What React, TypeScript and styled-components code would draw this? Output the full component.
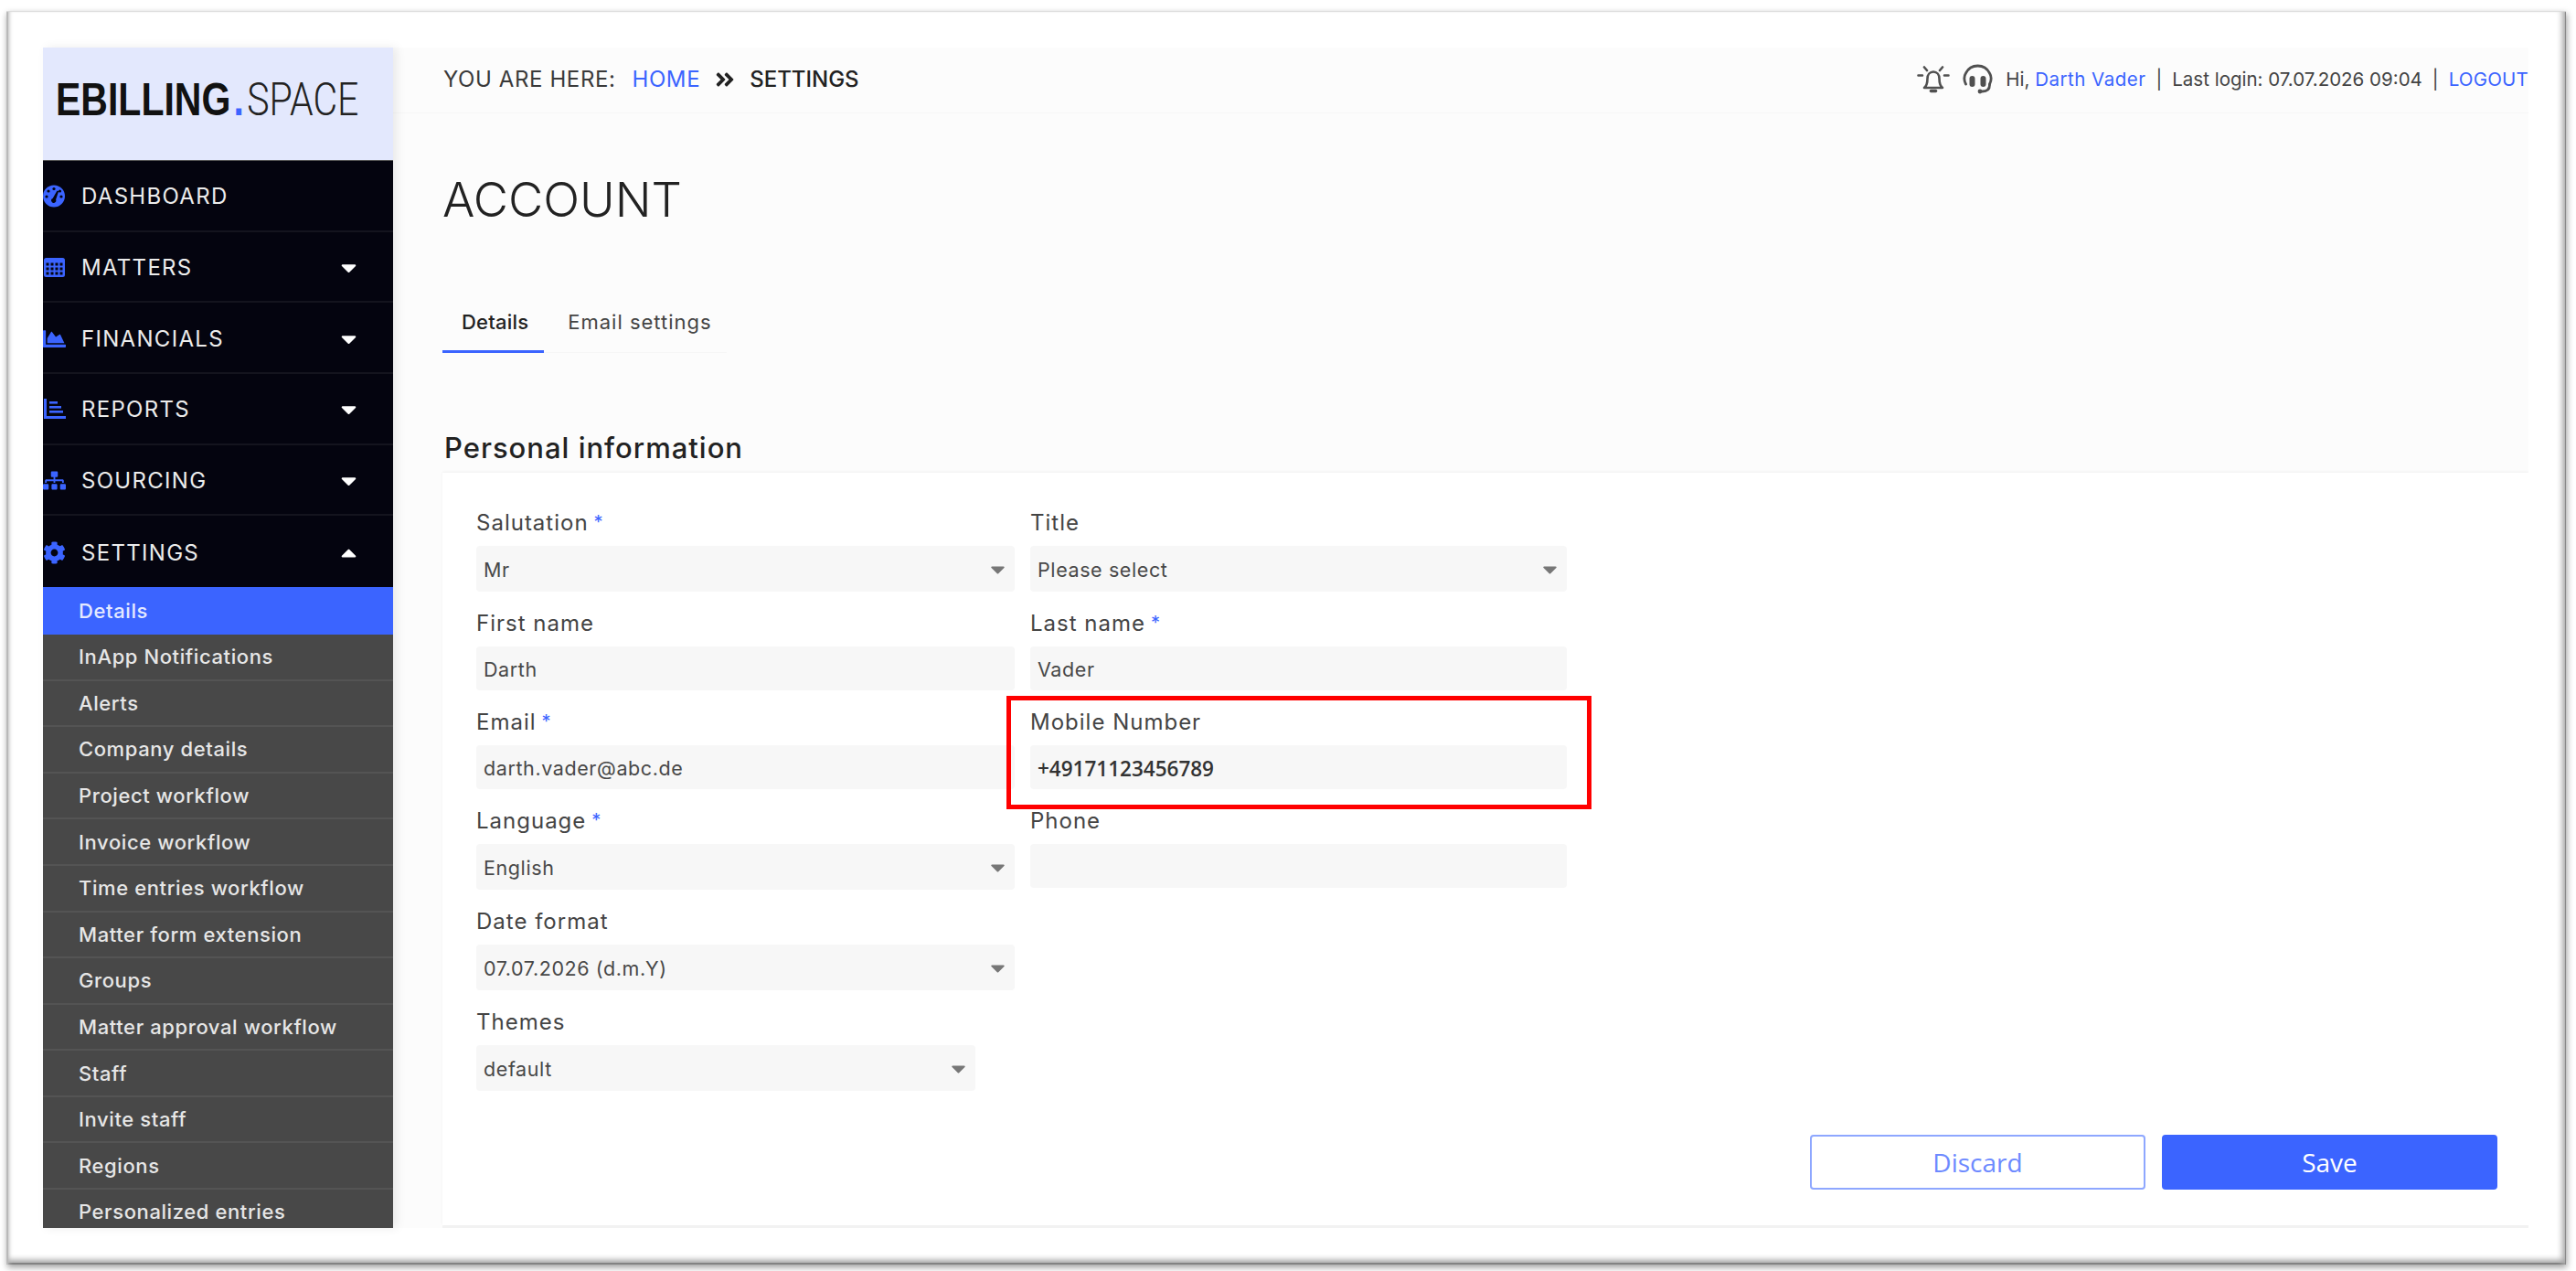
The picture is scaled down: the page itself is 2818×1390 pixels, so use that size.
import React from 'react';
import styled, { createGlobalStyle } from 'styled-components';
import {
  FaAngleDoubleRight,
  FaCaretDown,
  FaCaretUp,
  FaChartArea,
  FaCog,
  FaSitemap,
} from 'react-icons/fa';

const BLUE = '#3b64ff';
const FONT = 'Inter, "Noto Sans", sans-serif';

const GlobalStyle = createGlobalStyle`
  html, body {
    margin: 0;
    padding: 0;
    height: 100%;
    overflow: hidden;
    background: #ffffff;
    font-family: ${FONT};
  }
  * { box-sizing: border-box; }
`;

const StyledPage = styled.div`
  width: 2818px;
  height: 1390px;
  padding: 12px 11px 7px 7px;
`;

const StyledFrame = styled.div`
  display: flex;
  width: 100%;
  height: 100%;
  padding: 40px 41px 40px 40px;
  background: #ffffff;
  box-shadow:
    inset 0 1px 1px #dcdcdc,
    inset 2px 0 0 #b8b8b8,
    inset 6px 0 4px -3px #bbbbbb,
    inset -1px 0 0 #808080,
    inset -8px 0 6px -4px #a8a8a8,
    inset 0 -2px 0 #808080,
    inset 0 -9px 6px -4px #a0a0a0,
    1px 3px 7px rgba(0, 0, 0, 0.38);
`;

const StyledSidebar = styled.aside`
  flex: 0 0 383px;
  display: flex;
  flex-direction: column;
  overflow: hidden;
  box-shadow: 4px 0 10px rgba(0, 0, 0, 0.08);
  z-index: 1;
`;

const StyledLogo = styled.div`
  flex: 0 0 124px;
  display: flex;
  align-items: center;
  padding: 0 0 9px 14px;
  background: #e3e8fd;
  border-bottom: 1px solid #555;
  font-family: "Liberation Sans", sans-serif;
  font-size: 50px;
  line-height: 1;
  color: #111;
  white-space: nowrap;
`;

const StyledLogoText = styled.div`
  transform: scaleX(0.82);
  transform-origin: left center;
`;

const StyledLogoBold = styled.b`
  font-weight: 700;
`;

const StyledLogoDot = styled.span`
  margin: 0 4px 0 4px;
  color: ${BLUE};
  font-weight: 700;
`;

const StyledLogoLight = styled.span`
  font-family: Roboto, sans-serif;
  font-weight: 300;
  color: #222;
`;

const StyledMenu = styled.nav`
  background: #04040f;
`;

const StyledMenuRow = styled.div`
  display: flex;
  align-items: center;
  height: 77.67px;
  padding-top: 2px;
  border-bottom: 2px solid #14141e;
  color: #ececec;
  font-size: 24px;
  font-weight: 400;
  letter-spacing: 1.3px;
  &:last-child { border-bottom: 0; }
`;

const StyledMenuIcon = styled.span`
  flex: 0 0 42px;
  display: flex;
  align-items: center;
  color: ${BLUE};
  font-size: 25px;
`;

const StyledMenuLabel = styled.span`
  flex: 1;
`;

const StyledCaret = styled.span`
  flex: 0 0 62px;
  display: flex;
  color: #ffffff;
  font-size: 27px;
`;

const StyledSubMenu = styled.div`
  flex: 1;
  overflow: hidden;
  background: #484848;
`;

const StyledSubRow = styled.div<{ $active?: boolean }>`
  display: flex;
  align-items: center;
  height: ${(p) => (p.$active ? '52px' : '50.6px')};
  padding-left: 39px;
  background: ${(p) => (p.$active ? BLUE : 'transparent')};
  border-bottom: ${(p) => (p.$active ? '0' : '2px solid #545454')};
  color: ${(p) => (p.$active ? '#e4e9ff' : '#e6e6e6')};
  font-size: 22px;
  font-weight: 500;
  letter-spacing: 0.6px;
`;

const StyledMain = styled.main`
  flex: 1;
  min-width: 0;
  overflow: hidden;
  background: #fcfcfc;
`;

const StyledTopBar = styled.header`
  display: flex;
  align-items: center;
  justify-content: space-between;
  height: 72px;
  padding: 0 0 2px 55px;
  border-bottom: 1px solid #f6f6f6;
  white-space: nowrap;
`;

const StyledCrumbs = styled.div`
  display: flex;
  align-items: center;
  color: #3a3a3a;
  font-size: 24px;
  letter-spacing: 0.6px;
`;

const StyledCrumbLink = styled.a`
  margin-left: 18px;
  color: ${BLUE};
`;

const StyledCrumbArrow = styled.span`
  display: flex;
  margin: 0 15px;
  color: #222;
  font-size: 24px;
`;

const StyledCrumbCurrent = styled.b`
  color: #222;
  font-weight: 500;
  letter-spacing: 0;
`;

const StyledUser = styled.div`
  display: flex;
  flex: 0 0 auto;
  align-items: center;
  color: #444;
  font-size: 20.5px;
`;

const StyledUserIcon = styled.svg`
  display: block;
  margin-right: 14px;
  color: #505050;
`;

const StyledUserLink = styled.a<{ $wide?: boolean }>`
  color: ${BLUE};
  letter-spacing: ${(p) => (p.$wide ? '0.5px' : '0.2px')};
`;

const StyledPipe = styled.span`
  margin: 0 11px;
`;

const StyledContent = styled.div`
  padding: 0 0 0 54px;
`;

const StyledTitle = styled.h1`
  margin: 0;
  padding-top: 64px;
  color: #222;
  font-size: 52.5px;
  line-height: 60px;
  font-weight: 300;
`;

const StyledTabs = styled.div`
  display: flex;
  align-items: flex-end;
  width: 311px;
  height: 61px;
  margin-top: 77px;
  border-bottom: 1px solid #f6f6f6;
`;

const StyledTab = styled.div<{ $active?: boolean }>`
  height: 59px;
  padding: ${(p) => (p.$active ? '0 17px 0 21px' : '0 0 0 26px')};
  line-height: 50px;
  margin-bottom: -1px;
  border-bottom: 3px solid ${(p) => (p.$active ? BLUE : 'transparent')};
  color: ${(p) => (p.$active ? '#222' : '#444')};
  font-size: 22px;
  font-weight: ${(p) => (p.$active ? 500 : 400)};
  letter-spacing: ${(p) => (p.$active ? '0.2px' : '1px')};
`;

const StyledSection = styled.h2`
  margin: 0;
  padding-top: 86px;
  padding-left: 2px;
  color: #222;
  font-size: 31px;
  line-height: 36px;
  font-weight: 500;
  letter-spacing: 1px;
`;

const StyledCard = styled.section`
  margin-top: 9px;
  height: 823px;
  padding: 43px 34px 0 37px;
  background: #ffffff;
  box-shadow: 0 -1px 3px rgba(0, 0, 0, 0.05), 0 3px 0 #f2f2f2;
`;

const StyledFormGrid = styled.div`
  display: grid;
  grid-template-columns: 589px 587px;
  column-gap: 17px;
  align-items: start;
`;

const StyledField = styled.div<{ $col?: number; $width?: number }>`
  position: relative;
  grid-column: ${(p) => p.$col ?? 'auto'};
  width: ${(p) => (p.$width ? `${p.$width}px` : 'auto')};
  margin-bottom: 23px;
`;

const StyledLabel = styled.label`
  display: block;
  height: 24px;
  margin-bottom: 13px;
  color: #444;
  font-size: 24px;
  line-height: 24px;
  letter-spacing: 1px;
`;

const StyledRequired = styled.span`
  margin-left: 6px;
  color: ${BLUE};
  font-size: 20px;
  line-height: 0;
  vertical-align: 2px;
`;

const StyledInput = styled.div<{ $select?: boolean; $strong?: boolean }>`
  display: flex;
  align-items: center;
  justify-content: space-between;
  height: ${(p) => (p.$select ? '50px' : '48px')};
  padding: 2px 6px 0 8px;
  background: #f7f7f7;
  border-radius: 4px;
  color: ${(p) => (p.$strong ? '#333' : '#484848')};
  font-family: ${(p) => (p.$strong ? '"Open Sans", sans-serif' : FONT)};
  font-size: ${(p) => (p.$strong ? '22.5px' : '21.5px')};
  font-weight: ${(p) => (p.$strong ? 600 : 400)};
  letter-spacing: ${(p) => (p.$strong ? '0' : '0.6px')};
`;

const StyledSelectArrow = styled.span`
  display: flex;
  margin-top: -2px;
  color: #777;
  font-size: 25px;
`;

const StyledHighlight = styled.div`
  position: absolute;
  top: -17px;
  left: -26px;
  width: 640px;
  height: 124px;
  border: 5.5px solid #ff0000;
  pointer-events: none;
`;

const StyledActions = styled.div`
  display: flex;
  justify-content: flex-end;
  gap: 18px;
  margin-top: 25px;
`;

const StyledButton = styled.button<{ $primary?: boolean }>`
  width: 367px;
  height: 60px;
  border: 2px solid ${(p) => (p.$primary ? BLUE : '#8ea7ff')};
  border-radius: 4px;
  background: ${(p) => (p.$primary ? BLUE : '#ffffff')};
  color: ${(p) => (p.$primary ? '#ffffff' : '#6d8aff')};
  font-family: "Open Sans", sans-serif;
  font-size: 28px;
`;

function GaugeIcon() {
  return (
    <svg width="25" height="25" viewBox="0 0 25 25">
      <circle cx="12" cy="12.5" r="12" fill="currentColor" />
      <g fill="#04040f">
        <circle cx="12" cy="4.5" r="1.6" />
        <circle cx="6" cy="7" r="1.6" />
        <circle cx="18.5" cy="7" r="1.6" />
        <circle cx="4" cy="13" r="1.6" />
        <circle cx="20" cy="13" r="1.6" />
        <path d="M15.5 6.5l1.6.8-3 9a2.6 2.6 0 1 1-3.4-1.4z" />
      </g>
    </svg>
  );
}

function TableIcon() {
  return (
    <svg width="25" height="25" viewBox="0 0 25 25">
      <rect x="1" y="2" width="23" height="21" rx="2.5" fill="currentColor" />
      <g fill="#04040f">
        {[7.5, 12.5, 17.5].map((y) => [3.5, 8.5, 13.5, 18.5].map((x) => (
          <rect key={`${x}-${y}`} x={x} y={y} width="3" height="3" />
        )))}
      </g>
    </svg>
  );
}

function ReportsIcon() {
  return (
    <svg width="25" height="25" viewBox="0 0 25 25" fill="currentColor">
      <path d="M1 1h3v19h21v3H1z" />
      <rect x="7" y="4" width="9" height="2.6" />
      <rect x="7" y="9" width="13" height="2.6" />
      <rect x="7" y="14" width="15" height="2.6" />
    </svg>
  );
}

const MENU = [
  { label: 'DASHBOARD', icon: <GaugeIcon /> },
  { label: 'MATTERS', icon: <TableIcon />, caret: 'down' },
  { label: 'FINANCIALS', icon: <FaChartArea />, caret: 'down' },
  { label: 'REPORTS', icon: <ReportsIcon />, caret: 'down' },
  { label: 'SOURCING', icon: <FaSitemap />, caret: 'down' },
  { label: 'SETTINGS', icon: <FaCog />, caret: 'up' },
];

const SUB_MENU = [
  'InApp Notifications',
  'Alerts',
  'Company details',
  'Project workflow',
  'Invoice workflow',
  'Time entries workflow',
  'Matter form extension',
  'Groups',
  'Matter approval workflow',
  'Staff',
  'Invite staff',
  'Regions',
  'Personalized entries',
];

function BellIcon() {
  return (
    <StyledUserIcon width="36" height="30" viewBox="0 0 36 30" fill="none" stroke="currentColor" strokeWidth="2.6" strokeLinecap="round">
      <path d="M8 24c2.500-2 3.500-4.500 3.500-10 0-4.500 2.800-7.500 6.500-7.500s6.500 3 6.500 7.500c0 5.500 1 8 3.500 10z" strokeLinejoin="round" />
      <path d="M15.500 27.500h5" strokeWidth="3.600" />
      <path d="M8 1.500l3 3.500M28 1.500l-3 3.500M1.500 10.500h4.500M30 10.500h4.500" />
    </StyledUserIcon>
  );
}

function HeadsetIcon() {
  return (
    <StyledUserIcon width="33" height="33" viewBox="0 0 33 33" fill="none" stroke="currentColor" strokeWidth="2.800" strokeLinecap="round">
      <path d="M3.500 22c-2-4-2.500-8 0-12C6 5 11 2 16.500 2S27 5 29.500 10c2.500 4 2 8 0 12" />
      <path d="M29.500 23c0 4.500-3 7-8 7" />
      <circle cx="19" cy="30" r="2.400" fill="currentColor" stroke="none" />
      <rect x="7.500" y="13" width="6" height="12" rx="3" fill="currentColor" stroke="none" />
      <rect x="19.500" y="13" width="6" height="12" rx="3" fill="currentColor" stroke="none" />
    </StyledUserIcon>
  );
}

function Field({ label, value, required, select, strong, col, width, children }: {
  label: string;
  value?: string;
  required?: boolean;
  select?: boolean;
  strong?: boolean;
  col?: number;
  width?: number;
  children?: React.ReactNode;
}) {
  return (
    <StyledField $col={col} $width={width}>
      <StyledLabel>
        {label}
        {required && <StyledRequired>*</StyledRequired>}
      </StyledLabel>
      <StyledInput $select={select} $strong={strong}>
        <span>{value}</span>
        {select && <StyledSelectArrow><FaCaretDown /></StyledSelectArrow>}
      </StyledInput>
      {children}
    </StyledField>
  );
}

export default function App() {
  return (
    <StyledPage>
      <GlobalStyle />
      <StyledFrame>
        <StyledSidebar>
          <StyledLogo>
            <StyledLogoText>
              <StyledLogoBold>EBILLING</StyledLogoBold>
              <StyledLogoDot>.</StyledLogoDot>
              <StyledLogoLight>SPACE</StyledLogoLight>
            </StyledLogoText>
          </StyledLogo>
          <StyledMenu>
            {MENU.map((item) => (
              <StyledMenuRow key={item.label}>
                <StyledMenuIcon>{item.icon}</StyledMenuIcon>
                <StyledMenuLabel>{item.label}</StyledMenuLabel>
                {item.caret && (
                  <StyledCaret>{item.caret === 'up' ? <FaCaretUp /> : <FaCaretDown />}</StyledCaret>
                )}
              </StyledMenuRow>
            ))}
          </StyledMenu>
          <StyledSubMenu>
            <StyledSubRow $active>Details</StyledSubRow>
            {SUB_MENU.map((item) => (
              <StyledSubRow key={item}>{item}</StyledSubRow>
            ))}
          </StyledSubMenu>
        </StyledSidebar>
        <StyledMain>
          <StyledTopBar>
            <StyledCrumbs>
              YOU ARE HERE:
              <StyledCrumbLink>HOME</StyledCrumbLink>
              <StyledCrumbArrow><FaAngleDoubleRight /></StyledCrumbArrow>
              <StyledCrumbCurrent>SETTINGS</StyledCrumbCurrent>
            </StyledCrumbs>
            <StyledUser>
              <BellIcon />
              <HeadsetIcon />
              Hi,&nbsp;<StyledUserLink $wide>Darth Vader</StyledUserLink>
              <StyledPipe>|</StyledPipe>
              Last login: 07.07.2026 09:04
              <StyledPipe>|</StyledPipe>
              <StyledUserLink>LOGOUT</StyledUserLink>
            </StyledUser>
          </StyledTopBar>
          <StyledContent>
            <StyledTitle>ACCOUNT</StyledTitle>
            <StyledTabs>
              <StyledTab $active>Details</StyledTab>
              <StyledTab>Email settings</StyledTab>
            </StyledTabs>
            <StyledSection>Personal information</StyledSection>
            <StyledCard>
              <StyledFormGrid>
                <Field label="Salutation" value="Mr" required select />
                <Field label="Title" value="Please select" select />
                <Field label="First name" value="Darth" />
                <Field label="Last name" value="Vader" required />
                <Field label="Email" value="darth.vader@abc.de" required />
                <Field label="Mobile Number" value="+49171123456789" strong>
                  <StyledHighlight />
                </Field>
                <Field label="Language" value="English" required select />
                <Field label="Phone" />
                <Field label="Date format" value="07.07.2026 (d.m.Y)" select col={1} />
                <Field label="Themes" value="default" select col={1} width={546} />
              </StyledFormGrid>
              <StyledActions>
                <StyledButton>Discard</StyledButton>
                <StyledButton $primary>Save</StyledButton>
              </StyledActions>
            </StyledCard>
          </StyledContent>
        </StyledMain>
      </StyledFrame>
    </StyledPage>
  );
}
